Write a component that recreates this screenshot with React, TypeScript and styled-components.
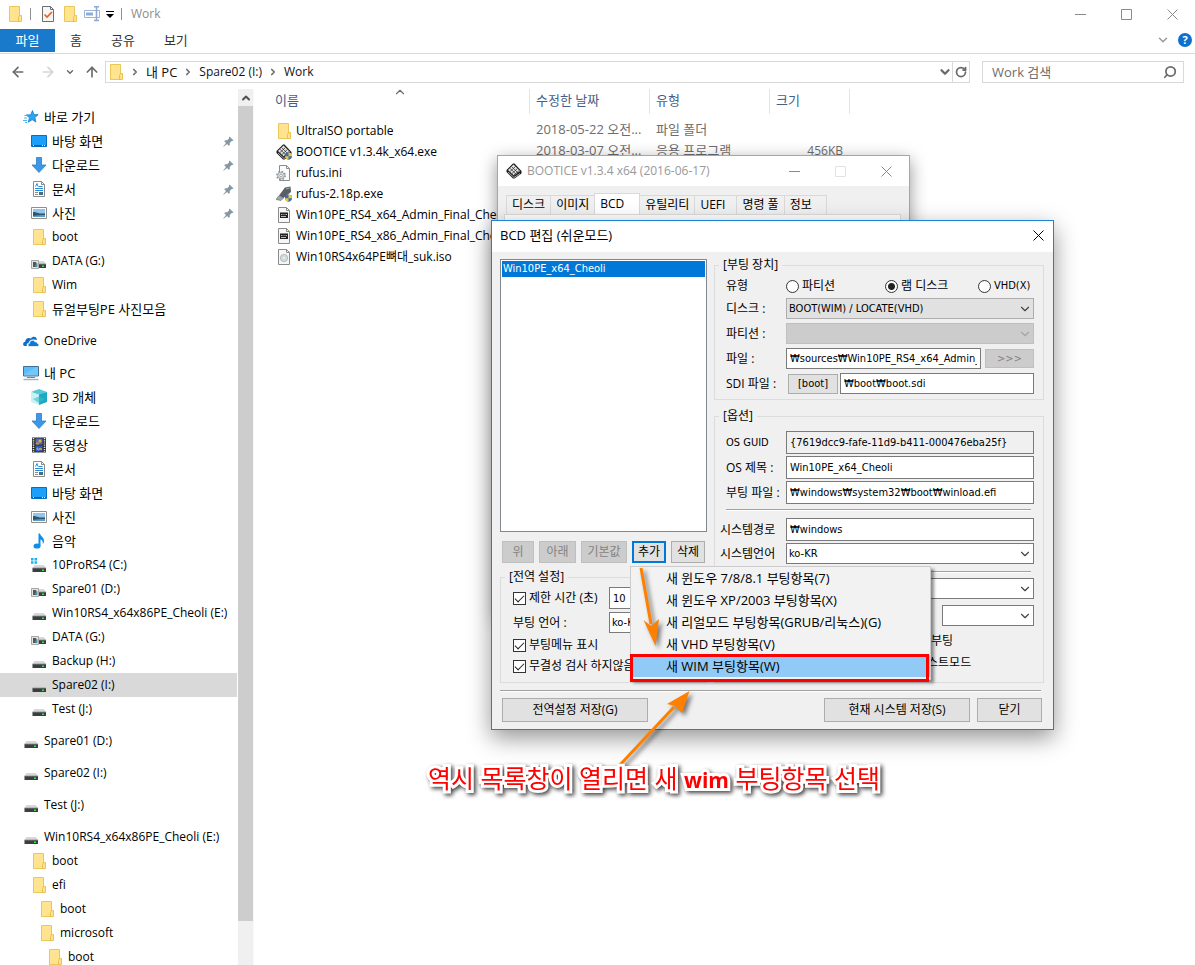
import React from 'react';
import styled, { createGlobalStyle, css } from 'styled-components';
import { ArrowLeft, ArrowRight, ArrowUp, ChevronDown, ChevronRight, ChevronUp, RotateCw, Search } from 'lucide-react';

const UI = '"Open Sans", "Noto Sans CJK KR", sans-serif';
const FORM = '"DejaVu Sans Condensed", "Noto Sans CJK KR", sans-serif';
const hasHangul = (s: string) => /[가-힣]/.test(s);

const Global = createGlobalStyle`
  *, *::before, *::after { box-sizing: border-box; }
  body { margin: 0; background: #fff; color: #000; font: 12px/16px ${UI}; }
  button, input, select { font: inherit; color: inherit; margin: 0; }
`;

/* ---------- icons ---------- */

const Svg = styled.svg.attrs({ viewBox: '0 0 16 16', width: 16, height: 16 })`
  display: block;
  flex: none;
`;

const FolderIcon = () => (
  <Svg>
    <path d="M2.500 .5h10v15h-10z" fill="#ffe38f" stroke="#e9c85a" />
    <path d="M12.500 9.500h2v6h-3v-4z" fill="#ffe38f" stroke="#e9b83a" strokeWidth=".8" />
  </Svg>
);
const StarIcon = () => (
  <Svg>
    <path d="M9.500 1.500l1.400 4 4.300.2-3.300 2.700 1 4.600-3.700-2.300-4 2.500 1.300-4.500L3.200 6l4.500-.2z" fill="#2fa3ee" stroke="#1380cf" strokeWidth=".8" />
    <path d="M1.500 6.500h3M1 9h3M0 11.500h4M2 13.500h2" stroke="#4db2f2" />
  </Svg>
);
const DesktopIcon = () => (
  <Svg>
    <path d="M.5 2.500h15v11H.5z" fill="#1aa0fb" stroke="#0a6cbb" />
    <path d="M1 12.500h14" stroke="#0a5fa8" />
    <path d="M2 12.500h1M11 12.500h1M13 12.500h1" stroke="#fff" />
  </Svg>
);
const DownIcon = () => (
  <Svg>
    <path d="M5.500.5h5V8h4.500L8 15.500 1 8h4.500z" fill="#3d97e6" stroke="#2c80cb" strokeWidth=".8" />
  </Svg>
);
const DocIcon = () => (
  <Svg>
    <path d="M2.500.5h8l3 3v12h-11z" fill="#fff" stroke="#8a8a8a" />
    <path d="M10.500.5v3h3" fill="none" stroke="#8a8a8a" />
    <path d="M4.500 5.500l1.500-3 1 3M7.500 5.500h4M4 7.500h8M4 9.500h8" stroke="#2a8ad6" fill="none" />
    <path d="M4 11.500h3M4 13.500h3" stroke="#8a8a8a" />
    <path d="M8 11h4v3H8z" fill="#3e6f86" />
  </Svg>
);
const PictureIcon = () => (
  <Svg>
    <path d="M.5 2.500h15v11H.5z" fill="#fff" stroke="#8f8f8f" />
    <path d="M2 4h12v8H2z" fill="#8fc4f5" />
    <path d="M2 7c3-.5 4 2 12 1.500V12H2z" fill="#2f5566" />
    <path d="M2 11c4-1 8-1 12-1v2H2z" fill="#5f9bc4" />
  </Svg>
);
const DriveIcon = ({ kind }: { kind?: 'win' | 'photo' }) => (
  <Svg>
    <path d="M3.500 8h9.500l2 3H1.500z" fill="#d5d8da" />
    <path d="M1.500 11H15v4H1.500z" fill="#3b3d3f" />
    <path d="M1.500 11H15" stroke="#8d9092" strokeWidth=".8" />
    <path d="M11 12.500h2v1.500h-2z" fill="#35e04c" />
    {kind === 'win' && (
      <>
        <path d="M0 0h7v7H0z" fill="#fff" />
        <path d="M0 1h2.500v2.500H0zM3.500 1H6v2.500H3.500zM0 4.300h2.500v2.500H0zM3.500 4.300H6v2.500H3.500z" fill="#17b4f0" />
      </>
    )}
    {kind === 'photo' && (
      <>
        <path d="M.5 7.500h7v8h-7z" fill="#e4e4e4" stroke="#a5a5a5" />
        <path d="M2 9h3l1 2.500V14H2z" fill="#4c5952" />
        <path d="M3.500 13l3-3v4z" fill="#4d9ac0" />
      </>
    )}
  </Svg>
);
const CloudIcon = () => (
  <Svg>
    <path d="M1.500 13C-.6 12.500-.2 9 2.200 8.700 2.200 5.500 5.600 4 8 5.600 9.500 2.500 14 3.500 14 7l-3-.5C8 6 6 8 5.500 10 3.500 10.500 3.500 12 4 13z" fill="#0f6fc9" />
    <path d="M6.500 13.500c-2-.3-1.800-3 0-3.200C6.600 7.500 10.500 6 12.300 9c2-.2 2.200 1 2.200 1.500 2 .6 1.700 3-.2 3z" fill="#0f78d4" stroke="#fff" strokeWidth=".7" />
  </Svg>
);
const PcIcon = () => (
  <Svg>
    <path d="M.5 1.500h15v9.500H.5z" fill="#5cbcf8" stroke="#44708f" />
    <path d="M1 9.500L13 2h2v8.500H1z" fill="#8ad2ff" opacity=".5" />
    <path d="M6 12.500h4M4 12.500h8" stroke="#6a8ba0" />
    <path d="M.5 14.500h15" stroke="#a5b4be" strokeWidth="1.500" />
  </Svg>
);
const CubeIcon = () => (
  <Svg>
    <path d="M0 3l8-3 8 3-8 3z" fill="#57c9d4" />
    <path d="M0 3l8 2.500V16l-8-3z" fill="#c9f1f4" />
    <path d="M16 3L8 5.500V16l8-3z" fill="#1ba9c4" />
    <path d="M2 10l6-2.500 6 2.500-6 4z" fill="#35bccb" opacity=".6" />
  </Svg>
);
const FilmIcon = () => (
  <Svg>
    <path d="M1 .5h14v15H1z" fill="#2b2b2b" />
    <path d="M2.500 1v14M13.500 1v14" stroke="#e8e8e8" strokeDasharray="1.200 1" strokeWidth="1.500" />
    <path d="M4.500 1.500h7v6h-7z" fill="#4f6fc6" />
    <path d="M4.500 8.500h7v6h-7z" fill="#3657b8" />
    <circle cx="9" cy="4" r="1.500" fill="#e9b22c" />
    <path d="M5 5.500h3v2H5zM8 11h3v2H8z" fill="#d8922a" />
    <path d="M5 12l2-2 1 4z" fill="#6db2ea" />
  </Svg>
);
const NoteIcon = () => (
  <Svg>
    <ellipse cx="6" cy="13" rx="3.500" ry="2.600" fill="#0f8ee9" />
    <path d="M7.500.5H9c.5 3 4.500 3.500 4 8.500-.5 1-.8 1.500-1.200 2C12 8 11 7 9.500 6.500V13h-2z" fill="#0f8ee9" />
  </Svg>
);
const PinIcon = () => (
  <svg width="11" height="11" viewBox="0 0 11 11">
    <path d="M6.500.5l4 4-1 .6-.8-.2-2 2 .1 2.100-1 .8L4 8 .6 10.800.2 10.400 3 7 1.300 5.200l.8-1 2.100.1 2-2L6 1.300z" fill="#8697a4" />
  </svg>
);
const CheckDocIcon = () => (
  <Svg>
    <path d="M2.500.5h8l3 3v12h-11z" fill="#f6f6f6" stroke="#6e6e6e" />
    <path d="M10.500.5v3h3" fill="none" stroke="#6e6e6e" />
    <path d="M4.500 8.500l2.500 2.500 5-5" fill="none" stroke="#ee5b1d" strokeWidth="1.600" />
  </Svg>
);
const RenameIcon = () => (
  <Svg>
    <path d="M.5 4.500h15v7H.5z" fill="#fff" stroke="#9db4d8" />
    <path d="M2 6.500h7v3H2z" fill="#8fabd4" />
    <path d="M12.500 1v13M10 .8h5M10 14.500h5" stroke="#8ea9d2" strokeWidth="1.600" />
  </Svg>
);
const ShieldBadge = () => (
  <>
    <path d="M9 9.500l3.500-1 3.500 1v3c0 2-2 3-3.500 3.500C11 15.500 9 14.500 9 12.500z" fill="#2d6fc0" />
    <path d="M12.500 8.500l3.500 1v2.700h-3.500zM9 12.200h3.500V16C11 15.500 9 14.500 9 12.200z" fill="#f7c531" />
  </>
);
const BooticeIcon = ({ shield }: { shield?: boolean }) => (
  <Svg>
    <path d="M7 .5h1.500L15.500 8v2.500l-7 5H7L.5 9V7z" fill="#1c1c1c" />
    <path d="M7.500 1.500L14 8l-6 4.500L2 7z" fill="#e2e2e2" />
    <path d="M5.500 3.500L12 10M4 5.200l6 6M9.500 3.500L4 8.500M11.500 5.500l-5.500 5M13 7.500l-5 4.500" stroke="#3a3a3a" strokeWidth=".8" />
    <path d="M2 9l6 5.500 6-4" stroke="#cfcfcf" strokeWidth=".8" fill="none" />
    {shield && <ShieldBadge />}
  </Svg>
);
const IniIcon = () => (
  <Svg>
    <path d="M3.500.5h7l3 3v12h-10z" fill="#fbfbfb" stroke="#8d8d8d" />
    <path d="M10.500.5v3h3" fill="none" stroke="#8d8d8d" />
    <circle cx="5" cy="10.500" r="4" fill="none" stroke="#90979c" strokeDasharray="1.600 1.540" strokeWidth="1.800" />
    <circle cx="5" cy="10.500" r="3.300" fill="#dfe3e5" stroke="#8d949a" strokeWidth=".8" />
    <circle cx="5" cy="10.500" r="1.300" fill="#fff" stroke="#8d949a" strokeWidth=".8" />
  </Svg>
);
const UsbIcon = () => (
  <Svg>
    <path d="M9 1.500L14.500.5 15 6 7.500 12 3 9.500z" fill="#5a5f63" />
    <path d="M10 3l3.500-1" stroke="#a8adb1" />
    <path d="M3 9.500L7.500 12 5 14.500 0 13.500z" fill="#9fa5a9" stroke="#606468" strokeWidth=".6" />
    <ShieldBadge />
  </Svg>
);
const WimIcon = () => (
  <Svg>
    <path d="M2.500.5h8l3 3v12h-11z" fill="#f7f7f7" stroke="#8a8a8a" />
    <path d="M10.500.5v3h3" fill="none" stroke="#8a8a8a" />
    <path d="M4 5h8v6H4z" fill="#222" />
    <path d="M5 7.500h1.500M7.500 7.500h1M9.500 7.500h1.500M5 9.500h5" stroke="#ccc" strokeWidth=".9" />
    <path d="M4 5.500h8" stroke="#888" />
  </Svg>
);
const IsoIcon = () => (
  <Svg>
    <path d="M2.500.5h8l3 3v12h-11z" fill="#f7f7f7" stroke="#8a8a8a" />
    <path d="M10.500.5v3h3" fill="none" stroke="#8a8a8a" />
    <circle cx="8" cy="9" r="3.700" fill="#d3d8db" stroke="#a9aeb1" strokeWidth=".7" />
    <circle cx="8" cy="9" r="1" fill="#f4f4f4" />
  </Svg>
);

/* ---------- explorer window ---------- */

const Desktop = styled.div`
  position: relative;
  height: 100vh;
  display: flex;
  flex-direction: column;
  overflow: hidden;
`;

const TitleBar = styled.header`
  display: flex;
  align-items: center;
  gap: 6px;
  height: 28px;
  padding-left: 7px;
  color: #8b8b8b;
`;

const Divider = styled.span`
  width: 1px;
  height: 12px;
  margin: 0 3px 0 1px;
  background: #8f8f8f;
`;

const QuickArrow = styled.span`
  width: 8px;
  border-top: 1px solid #000;
  padding-top: 2px;
  &::after {
    content: '';
    display: block;
    border: 4px solid transparent;
    border-top-color: #000;
    border-bottom: 0;
  }
`;

const WindowButtons = styled.div`
  display: flex;
  margin-left: auto;
`;

const WindowButton = styled.button<{ $dim?: boolean; $dark?: boolean }>`
  display: grid;
  place-items: center;
  width: 46px;
  height: 26px;
  padding: 0;
  border: 0;
  background: none;
  color: ${p => (p.$dark ? '#000' : p.$dim ? '#e2e2e2' : '#8a8a8a')};
`;

const CaptionGlyph = ({ d }: { d: string }) => (
  <svg width="11" height="11" viewBox="0 0 11 11" fill="none" stroke="currentColor">
    <path d={d} />
  </svg>
);
const MIN = 'M0 5.500h11';
const MAX = 'M.5 .5h10v10h-10z';
const CLOSE = 'M.5 .5l10 10M10.500 .5l-10 10';

const Ribbon = styled.nav`
  display: flex;
  align-items: center;
  gap: 1px;
  height: 26px;
  padding-bottom: 1px;
  border-bottom: 1px solid #dadbdc;
  font-size: 13px;
`;

const RibbonTab = styled.button<{ $active?: boolean }>`
  height: 23px;
  padding: 0 14px;
  border: 0;
  background: none;
  color: #333;
  ${p => p.$active && css`
    min-width: 55px;
    background: #1979ca;
    color: #fff;
  `}
`;

const RibbonEnd = styled.div`
  display: flex;
  align-items: center;
  gap: 8px;
  margin-left: auto;
  padding-right: 3px;
  color: #9a9a9a;
`;

const HelpButton = styled.button`
  width: 14px;
  height: 14px;
  padding: 0;
  border: 0;
  border-radius: 50%;
  background: #0f70cf;
  color: #fff;
  font: bold 11px/14px ${UI};
`;

const NavRow = styled.div`
  display: flex;
  align-items: center;
  height: 35px;
  padding: 0 11px 0 10px;
  color: #6b6b6b;
`;

const NavButtons = styled.div`
  display: flex;
  align-items: center;
  gap: 9px;
  margin-right: 5px;
`;

const IconButton = styled.button<{ $faint?: boolean }>`
  display: grid;
  place-items: center;
  margin-left: ${p => (p.$faint ? 5 : 0)}px;
  padding: 0;
  border: 0;
  background: none;
  color: ${p => (p.$faint ? '#d4d4d4' : '#6b6b6b')};
`;

const AddressBar = styled.div`
  display: flex;
  align-items: center;
  flex: 1;
  height: 22px;
  border: 1px solid #d9d9d9;
  padding-left: 2px;
`;

const Crumb = styled.a<{ $ko?: boolean }>`
  color: #111;
  text-decoration: none;
  font-size: ${p => (p.$ko ? 13 : 12)}px;
`;

const CrumbArrow = styled.span`
  display: grid;
  place-items: center;
  width: 22px;
`;

const AddressEnd = styled.div`
  display: flex;
  align-items: center;
  height: 100%;
  margin-left: auto;
`;

const RefreshCell = styled.div`
  display: grid;
  place-items: center;
  width: 17px;
  height: 100%;
  border-left: 1px solid #d9d9d9;
`;

const SearchBox = styled.label`
  display: flex;
  align-items: center;
  width: 202px;
  height: 22px;
  margin-left: 12px;
  padding: 0 6px 0 9px;
  border: 1px solid #d9d9d9;
`;

const SearchInput = styled.input`
  flex: 1;
  min-width: 0;
  padding: 0;
  border: 0;
  outline: 0;
  background: none;
  font-size: 13px;
  &::placeholder { color: #6d6d6d; opacity: 1; }
`;

const SearchGlyph = styled(Search)`
  transform: scaleX(-1);
`;

const Main = styled.main`
  display: flex;
  flex: 1;
  min-height: 0;
`;

const Sidebar = styled.nav`
  width: 237px;
  padding-top: 16px;
  overflow: hidden;
`;

const TreeItem = styled.a<{ $level: number; $gap?: boolean; $active?: boolean; $ko?: boolean }>`
  display: flex;
  align-items: center;
  gap: 5px;
  height: 24px;
  margin-top: ${p => (p.$gap ? 8 : 0)}px;
  padding: 0 3px 0 ${p => 23 + p.$level * 8}px;
  background: ${p => (p.$active ? '#d9d9d9' : 'none')};
  color: #000;
  text-decoration: none;
  white-space: nowrap;
  font-size: ${p => (p.$ko ? 13 : 12)}px;
  line-height: ${p => (p.$ko ? 18 : 16)}px;
`;

const PinSlot = styled.span`
  margin-left: auto;
  display: flex;
`;

const ScrollBar = styled.div`
  display: flex;
  flex-direction: column;
  width: 16px;
  margin-left: 1px;
  background: #f0f0f0;
  border-right: 1px solid #f8f8f8;
`;

const ScrollUp = styled.button`
  display: grid;
  place-items: center;
  height: 17px;
  padding: 0;
  border: 0;
  background: none;
  color: #505050;
`;

const ScrollThumb = styled.div`
  flex: 815;
  background: #cdcdcd;
`;

const ScrollRest = styled.div`
  flex: 44;
`;

const FilePane = styled.section`
  flex: 1;
  min-width: 0;
  margin-left: 3px;
  padding-left: 12px;
`;

const FileTable = styled.table`
  width: 581px;
  table-layout: fixed;
  border-collapse: collapse;
`;

const HeadCell = styled.th<{ $w: number }>`
  position: relative;
  width: ${p => p.$w}px;
  padding: 0 0 6px;
  color: #44608a;
  font-size: 13px;
  font-weight: normal;
  text-align: left;
  & > span {
    display: block;
    height: 25px;
    padding-left: 6px;
    border-right: 1px solid #e5e5e5;
    line-height: 23px;
  }
`;

const SortMark = styled(ChevronUp)`
  position: absolute;
  top: -4px;
  left: calc(50% - 7px);
  color: #6d6d6d;
`;

const Cell = styled.td<{ $meta?: boolean; $right?: boolean; $ko?: boolean }>`
  height: 21px;
  padding: 0 7px 0 ${p => (p.$meta ? 6 : 7)}px;
  overflow: hidden;
  white-space: nowrap;
  text-overflow: ellipsis;
  vertical-align: ${p => (p.$meta ? 'top' : 'middle')};
  line-height: ${p => (p.$meta ? 19 : 20)}px;
  color: ${p => (p.$meta ? '#6d6d6d' : '#000')};
  text-align: ${p => (p.$right ? 'right' : 'left')};
  font-size: ${p => (p.$ko ? 13 : 12)}px;
`;

const FileName = styled.span`
  display: flex;
  align-items: center;
  gap: 4px;
`;

/* ---------- BOOTICE window ---------- */

const BooticeWindow = styled.section`
  position: absolute;
  left: 497px;
  top: 155px;
  width: 413px;
  height: 460px;
  border: 1px solid #a6a6a6;
  background: #f0f0f0;
  box-shadow: 0 5px 16px rgba(0, 0, 0, 0.42);
`;

const BooticeTitle = styled.header`
  display: flex;
  align-items: center;
  gap: 5px;
  height: 30px;
  padding-left: 8px;
  background: #fff;
  color: #999;
`;

const TabStrip = styled.div`
  display: flex;
  align-items: flex-end;
  height: 28px;
  padding: 0 0 0 9px;
`;

const Tab = styled.button<{ $active?: boolean }>`
  min-width: 43px;
  height: ${p => (p.$active ? 21 : 19)}px;
  margin-left: -1px;
  padding: 0 5px;
  border: 1px solid #d9d9d9;
  border-bottom: 0;
  background: ${p => (p.$active ? '#fff' : '#f0f0f0')};
  text-align: left;
  line-height: 18px;
  ${p => p.$active && css`width: 46px;`}
`;

const TabPage = styled.div`
  height: 390px;
  margin: 0 8px 0 6px;
  border: 1px solid #dcdcdc;
  background: #fff;
`;

/* ---------- BCD dialog ---------- */

const Dialog = styled.section`
  position: absolute;
  left: 491px;
  top: 220px;
  width: 563px;
  border: 1px solid #1883d7;
  background: #f0f0f0;
  box-shadow: 0 8px 22px rgba(0, 0, 0, 0.42);
  font-size: 12px;
`;

const DialogTitle = styled.header`
  display: flex;
  align-items: center;
  justify-content: space-between;
  height: 31px;
  padding: 0 0 3px 8px;
  background: #fff;
  font-size: 13px;
`;

const DialogButtonSlot = styled.div`
  margin-right: -8px;
`;

const DialogBody = styled.form`
  padding: 5px 9px 7px 8px;
`;

const Columns = styled.div`
  display: grid;
  grid-template-columns: 207px 1fr;
  gap: 7px;
`;

const Column = styled.div`
  display: flex;
  flex-direction: column;
`;

const ListBox = styled.ul`
  height: 273px;
  margin: 2px 0 9px;
  padding: 1px;
  border: 1px solid #828790;
  background: #fff;
  list-style: none;
`;

const ListRow = styled.li`
  height: 16px;
  padding-left: 1px;
  background: #0078d7;
  color: #fff;
  font: 11px/15px ${FORM};
`;

const ButtonRow = styled.div`
  display: flex;
  gap: 5px;
  margin-bottom: 6px;
  padding: 0 2px;
`;

const Button = styled.button<{ $w: number; $focus?: boolean; $latin?: boolean; $h?: number }>`
  flex: none;
  width: ${p => p.$w}px;
  height: ${p => p.$h ?? 22}px;
  padding: 0;
  border: ${p => (p.$focus ? '2px solid #0078d7' : '1px solid #adadad')};
  background: #e1e1e1;
  line-height: 16px;
  white-space: nowrap;
  ${p => p.$latin && css`font: 11px/16px ${FORM};`}
  &:disabled { background: #ccc; border-color: #bfbfbf; color: #838383; }
`;

const Group = styled.fieldset<{ $pad: string }>`
  min-width: 0;
  margin: 0;
  padding: ${p => p.$pad};
  border: 1px solid #dcdcdc;
`;

const OptionsGroup = styled(Group)`
  margin-top: 8px;
`;

const Legend = styled.legend<{ $shift: number }>`
  height: 16px;
  margin-left: ${p => p.$shift}px;
  padding: 0 4px;
  line-height: 16px;
`;

const Rows = styled.div<{ $gap: number }>`
  display: flex;
  flex-direction: column;
  gap: ${p => p.$gap}px;
`;

const FieldRow = styled.div<{ $h: number; $label: number }>`
  display: grid;
  grid-template-columns: ${p => p.$label}px 1fr;
  align-items: center;
  height: ${p => p.$h}px;
`;

const FieldLabel = styled.label<{ $indent?: boolean; $latin?: boolean }>`
  padding-left: ${p => (p.$indent ? 6 : 0)}px;
  white-space: nowrap;
  ${p => p.$latin && css`font-family: ${FORM}; font-size: 11px;`}
`;

const TextInput = styled.input<{ $muted?: boolean }>`
  width: 100%;
  min-width: 0;
  height: 100%;
  padding: 0 3px;
  border: 1px solid #7a7a7a;
  background: ${p => (p.$muted ? '#f0f0f0' : '#fff')};
  outline: 0;
  font: 11px/16px ${FORM};
`;

const Inline = styled.div`
  display: flex;
  align-items: center;
  gap: 4px;
  height: 100%;
`;

const SdiInline = styled(Inline)`
  gap: 2px;
  padding-left: 2px;
`;

const ComboWrap = styled.div<{ $w?: number; $disabled?: boolean }>`
  position: relative;
  width: ${p => (p.$w ? `${p.$w}px` : '100%')};
  height: 21px;
  color: ${p => (p.$disabled ? '#a5a5a5' : '#444')};
  & > svg {
    position: absolute;
    right: 2px;
    top: 4px;
    pointer-events: none;
  }
`;

const ComboSelect = styled.select<{ $look: 'white' | 'gray' | 'off' }>`
  appearance: none;
  width: 100%;
  height: 100%;
  padding: 0 18px 0 2px;
  border: 1px solid ${p => ({ white: '#7a7a7a', gray: '#adadad', off: '#bfbfbf' })[p.$look]};
  border-radius: 0;
  background: ${p => ({ white: '#fff', gray: '#e1e1e1', off: '#ccc' })[p.$look]};
  color: #000;
  opacity: 1;
  font: 11px/16px ${FORM};
`;

type ComboProps = { id: string; value?: string; look?: 'white' | 'gray' | 'off'; w?: number; label?: string };
const Combo = ({ id, value = '', look = 'white', w, label }: ComboProps) => (
  <ComboWrap $w={w} $disabled={look === 'off'}>
    <ComboSelect id={id} $look={look} disabled={look === 'off'} aria-label={label}>
      <option>{value}</option>
    </ComboSelect>
    <ChevronDown size={14} strokeWidth={2} />
  </ComboWrap>
);

const Rule = styled.hr<{ $m: string }>`
  height: 2px;
  margin: ${p => p.$m};
  border: 0;
  border-top: 1px solid #a0a0a0;
  background: #fff;
`;

const RadioGroup = styled.div`
  display: grid;
  grid-template-columns: 99px 93px 1fr;
  align-items: center;
`;

const Choice = styled.label<{ $latin?: boolean }>`
  display: flex;
  align-items: center;
  gap: 3px;
  white-space: nowrap;
  ${p => p.$latin && css`font: 11px/16px ${FORM};`}
`;

const Radio = styled.input.attrs({ type: 'radio' })`
  appearance: none;
  width: 13px;
  height: 13px;
  border: 1px solid #333;
  border-radius: 50%;
  background: #fff;
  &:checked { background: radial-gradient(circle, #222 0 3px, #fff 4px); }
`;

const Check = styled.input.attrs({ type: 'checkbox' })`
  appearance: none;
  display: grid;
  place-items: center;
  width: 13px;
  height: 13px;
  border: 1px solid #333;
  background: #fff;
  &:checked::before {
    content: '';
    width: 9px;
    height: 5px;
    margin-top: -2px;
    border: solid #222;
    border-width: 0 0 1px 1px;
    transform: rotate(-45deg);
  }
`;

const CheckLine = styled.div<{ $h: number; $left?: number }>`
  display: flex;
  align-items: center;
  height: ${p => p.$h}px;
  padding-left: ${p => p.$left ?? 0}px;
`;

const RightAligned = styled.div`
  display: flex;
  justify-content: flex-end;
  margin-bottom: 6px;
`;

const Footer = styled.footer`
  display: flex;
  gap: 7px;
  padding: 0 2px;
  & > :first-child { margin-right: auto; }
`;

/* ---------- popup menu ---------- */

const MenuAnchor = styled.div`
  position: relative;
`;

const Menu = styled.ul`
  position: absolute;
  z-index: 2;
  top: 25px;
  left: -2px;
  width: 301px;
  margin: 0;
  padding: 0 0 2px;
  border: 1px solid #ccc;
  background: #f2f2f2;
  box-shadow: 3px 3px 3px rgba(0, 0, 0, 0.45);
  list-style: none;
  font-size: 13px;
`;

const MenuItem = styled.li<{ $active?: boolean }>`
  position: relative;
  height: 22px;
  padding-left: 35px;
  line-height: 22px;
  white-space: nowrap;
  ${p => p.$active && css`
    background: #91c9f7;
    &::after {
      content: '';
      position: absolute;
      inset: -1px 1px -5px -1px;
      border: 3px solid #fe0000;
    }
  `}
`;

/* ---------- annotations ---------- */

const Arrows = styled.svg`
  position: absolute;
  z-index: 3;
  left: 610px;
  top: 560px;
  overflow: visible;
  pointer-events: none;
  filter: drop-shadow(3px 3px 2px rgba(0, 0, 0, 0.5));
`;

const Caption = styled.p`
  position: absolute;
  z-index: 3;
  left: 428px;
  top: 760px;
  margin: 0;
  color: #fe0000;
  font-size: 25px;
  line-height: 36px;
  white-space: nowrap;
  -webkit-text-stroke: 6px #fff;
  paint-order: stroke fill;
  stroke-linejoin: round;
  filter: drop-shadow(2px 2px 2px rgba(0, 0, 0, 0.75));
  & > strong { font-size: 21px; }
`;

/* ---------- data ---------- */

type Node = { t: string; i: React.ReactNode; l: number; gap?: boolean; pin?: boolean; on?: boolean };
const TREE: Node[] = [
  { t: '바로 가기', i: <StarIcon />, l: 0 },
  { t: '바탕 화면', i: <DesktopIcon />, l: 1, pin: true },
  { t: '다운로드', i: <DownIcon />, l: 1, pin: true },
  { t: '문서', i: <DocIcon />, l: 1, pin: true },
  { t: '사진', i: <PictureIcon />, l: 1, pin: true },
  { t: 'boot', i: <FolderIcon />, l: 1 },
  { t: 'DATA (G:)', i: <DriveIcon kind="photo" />, l: 1 },
  { t: 'Wim', i: <FolderIcon />, l: 1 },
  { t: '듀얼부팅PE 사진모음', i: <FolderIcon />, l: 1 },
  { t: 'OneDrive', i: <CloudIcon />, l: 0, gap: true },
  { t: '내 PC', i: <PcIcon />, l: 0, gap: true },
  { t: '3D 개체', i: <CubeIcon />, l: 1 },
  { t: '다운로드', i: <DownIcon />, l: 1 },
  { t: '동영상', i: <FilmIcon />, l: 1 },
  { t: '문서', i: <DocIcon />, l: 1 },
  { t: '바탕 화면', i: <DesktopIcon />, l: 1 },
  { t: '사진', i: <PictureIcon />, l: 1 },
  { t: '음악', i: <NoteIcon />, l: 1 },
  { t: '10ProRS4 (C:)', i: <DriveIcon kind="win" />, l: 1 },
  { t: 'Spare01 (D:)', i: <DriveIcon kind="photo" />, l: 1 },
  { t: 'Win10RS4_x64x86PE_Cheoli (E:)', i: <DriveIcon />, l: 1 },
  { t: 'DATA (G:)', i: <DriveIcon kind="photo" />, l: 1 },
  { t: 'Backup (H:)', i: <DriveIcon />, l: 1 },
  { t: 'Spare02 (I:)', i: <DriveIcon />, l: 1, on: true },
  { t: 'Test (J:)', i: <DriveIcon />, l: 1 },
  { t: 'Spare01 (D:)', i: <DriveIcon />, l: 0, gap: true },
  { t: 'Spare02 (I:)', i: <DriveIcon />, l: 0, gap: true },
  { t: 'Test (J:)', i: <DriveIcon />, l: 0, gap: true },
  { t: 'Win10RS4_x64x86PE_Cheoli (E:)', i: <DriveIcon />, l: 0, gap: true },
  { t: 'boot', i: <FolderIcon />, l: 1 },
  { t: 'efi', i: <FolderIcon />, l: 1 },
  { t: 'boot', i: <FolderIcon />, l: 2 },
  { t: 'microsoft', i: <FolderIcon />, l: 2 },
  { t: 'boot', i: <FolderIcon />, l: 3 },
];

const FILES: { n: string; i: React.ReactNode; d?: string; k?: string; s?: string }[] = [
  { n: 'UltraISO portable', i: <FolderIcon />, d: '2018-05-22 오전...', k: '파일 폴더' },
  { n: 'BOOTICE v1.3.4k_x64.exe', i: <BooticeIcon shield />, d: '2018-03-07 오전...', k: '응용 프로그램', s: '456KB' },
  { n: 'rufus.ini', i: <IniIcon /> },
  { n: 'rufus-2.18p.exe', i: <UsbIcon /> },
  { n: 'Win10PE_RS4_x64_Admin_Final_Cheoli', i: <WimIcon /> },
  { n: 'Win10PE_RS4_x86_Admin_Final_Cheoli', i: <WimIcon /> },
  { n: 'Win10RS4x64PE뼈대_suk.iso', i: <IsoIcon /> },
];

const MENU = [
  '새 윈도우 7/8/8.1 부팅항목(7)',
  '새 윈도우 XP/2003 부팅항목(X)',
  '새 리얼모드 부팅항목(GRUB/리눅스)(G)',
  '새 VHD 부팅항목(V)',
  '새 WIM 부팅항목(W)',
];

const TABS = ['디스크', '이미지', 'BCD', '유틸리티', 'UEFI', '명령 풀', '정보'];

/* ---------- views ---------- */

const Explorer = () => (
  <>
    <TitleBar>
      <FolderIcon />
      <Divider />
      <CheckDocIcon />
      <FolderIcon />
      <RenameIcon />
      <QuickArrow />
      <Divider />
      <span>Work</span>
      <WindowButtons>
        <WindowButton aria-label="최소화"><CaptionGlyph d={MIN} /></WindowButton>
        <WindowButton aria-label="최대화"><CaptionGlyph d={MAX} /></WindowButton>
        <WindowButton aria-label="닫기"><CaptionGlyph d={CLOSE} /></WindowButton>
      </WindowButtons>
    </TitleBar>
    <Ribbon>
      <RibbonTab $active>파일</RibbonTab>
      <RibbonTab>홈</RibbonTab>
      <RibbonTab>공유</RibbonTab>
      <RibbonTab>보기</RibbonTab>
      <RibbonEnd>
        <ChevronDown size={14} strokeWidth={2.5} />
        <HelpButton>?</HelpButton>
      </RibbonEnd>
    </Ribbon>
    <NavRow>
      <NavButtons>
        <IconButton aria-label="뒤로"><ArrowLeft size={16} strokeWidth={2.5} /></IconButton>
        <IconButton aria-label="앞으로" $faint><ArrowRight size={16} strokeWidth={2.5} /></IconButton>
        <IconButton aria-label="최근 위치"><ChevronDown size={10} strokeWidth={3.5} /></IconButton>
        <IconButton aria-label="위로"><ArrowUp size={16} strokeWidth={2.5} /></IconButton>
      </NavButtons>
      <AddressBar>
        <FolderIcon />
        <CrumbArrow><ChevronRight size={10} strokeWidth={4} /></CrumbArrow>
        <Crumb href="#pc" $ko>내 PC</Crumb>
        <CrumbArrow><ChevronRight size={10} strokeWidth={4} /></CrumbArrow>
        <Crumb href="#spare02">Spare02 (I:)</Crumb>
        <CrumbArrow><ChevronRight size={10} strokeWidth={4} /></CrumbArrow>
        <Crumb href="#work">Work</Crumb>
        <AddressEnd>
          <ChevronDown size={14} strokeWidth={4} />
          <RefreshCell><RotateCw size={12} strokeWidth={3.5} /></RefreshCell>
        </AddressEnd>
      </AddressBar>
      <SearchBox>
        <SearchInput placeholder="Work 검색" aria-label="Work 검색" />
        <SearchGlyph size={14} strokeWidth={3} />
      </SearchBox>
    </NavRow>
    <Main>
      <Sidebar>
        {TREE.map((n, k) => (
          <TreeItem key={k} href="#" $level={n.l} $gap={n.gap} $active={n.on} $ko={hasHangul(n.t)}>
            {n.i}
            {n.t}
            {n.pin && <PinSlot><PinIcon /></PinSlot>}
          </TreeItem>
        ))}
      </Sidebar>
      <ScrollBar>
        <ScrollUp aria-label="위로 스크롤"><ChevronUp size={12} strokeWidth={4} /></ScrollUp>
        <ScrollThumb />
        <ScrollRest />
      </ScrollBar>
      <FilePane>
        <FileTable>
          <thead>
            <tr>
              <HeadCell $w={261}><SortMark size={14} strokeWidth={2} /><span>이름</span></HeadCell>
              <HeadCell $w={120}><span>수정한 날짜</span></HeadCell>
              <HeadCell $w={120}><span>유형</span></HeadCell>
              <HeadCell $w={80}><span>크기</span></HeadCell>
            </tr>
          </thead>
          <tbody>
            {FILES.map(f => (
              <tr key={f.n}>
                <Cell><FileName>{f.i}{f.n}</FileName></Cell>
                <Cell $meta $ko>{f.d}</Cell>
                <Cell $meta $ko>{f.k}</Cell>
                <Cell $meta $right>{f.s}</Cell>
              </tr>
            ))}
          </tbody>
        </FileTable>
      </FilePane>
    </Main>
  </>
);

const Bootice = () => (
  <BooticeWindow>
    <BooticeTitle>
      <BooticeIcon />
      <span>BOOTICE v1.3.4 x64 (2016-06-17)</span>
      <WindowButtons>
        <WindowButton aria-label="최소화"><CaptionGlyph d={MIN} /></WindowButton>
        <WindowButton aria-label="최대화" $dim disabled><CaptionGlyph d={MAX} /></WindowButton>
        <WindowButton aria-label="닫기"><CaptionGlyph d={CLOSE} /></WindowButton>
      </WindowButtons>
    </BooticeTitle>
    <TabStrip>
      {TABS.map(t => <Tab key={t} $active={t === 'BCD'}>{t}</Tab>)}
    </TabStrip>
    <TabPage />
  </BooticeWindow>
);

const LeftColumn = () => (
  <Column>
    <ListBox>
      <ListRow>Win10PE_x64_Cheoli</ListRow>
    </ListBox>
    <ButtonRow>
      <Button type="button" $w={32} disabled>위</Button>
      <Button type="button" $w={37} disabled>아래</Button>
      <Button type="button" $w={46} disabled>기본값</Button>
      <MenuAnchor>
        <Button type="button" $w={34} $focus>추가</Button>
        <Menu>
          {MENU.map((m, k) => <MenuItem key={m} $active={k === 4}>{m}</MenuItem>)}
        </Menu>
      </MenuAnchor>
      <Button type="button" $w={34}>삭제</Button>
    </ButtonRow>
    <Group $pad="2px 6px 7px 12px">
      <Legend $shift={-8}>[전역 설정]</Legend>
      <Rows $gap={3}>
        <FieldRow $h={22} $label={96}>
          <Choice><Check defaultChecked />제한 시간 (초)</Choice>
          <TextInput defaultValue="10" aria-label="제한 시간" />
        </FieldRow>
        <FieldRow $h={21} $label={96}>
          <FieldLabel htmlFor="bootlang">부팅 언어 :</FieldLabel>
          <Combo id="bootlang" value="ko-KR" />
        </FieldRow>
        <CheckLine $h={18}><Choice><Check defaultChecked />부팅메뉴 표시</Choice></CheckLine>
        <CheckLine $h={18}><Choice><Check defaultChecked />무결성 검사 하지않음</Choice></CheckLine>
      </Rows>
    </Group>
  </Column>
);

const RightColumn = () => (
  <Column>
    <Group $pad="5px 9px 5px 11px">
      <Legend $shift={-7}>[부팅 장치]</Legend>
      <Rows $gap={4}>
        <FieldRow $h={16} $label={60}>
          <span>유형</span>
          <RadioGroup>
            <Choice><Radio name="type" />파티션</Choice>
            <Choice><Radio name="type" defaultChecked />램 디스크</Choice>
            <Choice $latin><Radio name="type" />VHD(X)</Choice>
          </RadioGroup>
        </FieldRow>
        <FieldRow $h={21} $label={60}>
          <FieldLabel htmlFor="disk">디스크 :</FieldLabel>
          <Combo id="disk" look="gray" value="BOOT(WIM) / LOCATE(VHD)" />
        </FieldRow>
        <FieldRow $h={21} $label={60}>
          <FieldLabel htmlFor="part">파티션 :</FieldLabel>
          <Combo id="part" look="off" />
        </FieldRow>
        <FieldRow $h={21} $label={60}>
          <FieldLabel htmlFor="file">파일 :</FieldLabel>
          <Inline>
            <TextInput id="file" defaultValue="₩sources₩Win10PE_RS4_x64_Admin_Final" />
            <Button type="button" $w={49} $h={19} $latin disabled>&gt;&gt;&gt;</Button>
          </Inline>
        </FieldRow>
        <FieldRow $h={21} $label={60}>
          <FieldLabel htmlFor="sdi">SDI 파일 :</FieldLabel>
          <SdiInline>
            <Button type="button" $w={50} $h={20} $latin>[boot]</Button>
            <TextInput id="sdi" defaultValue="₩boot₩boot.sdi" />
          </SdiInline>
        </FieldRow>
      </Rows>
    </Group>
    <OptionsGroup $pad="7px 9px 10px 5px">
      <Legend $shift={-1}>[옵션]</Legend>
      <Rows $gap={2}>
        <FieldRow $h={23} $label={66}>
          <FieldLabel htmlFor="guid" $indent $latin>OS GUID</FieldLabel>
          <TextInput id="guid" $muted readOnly defaultValue="{7619dcc9-fafe-11d9-b411-000476eba25f}" />
        </FieldRow>
        <FieldRow $h={23} $label={66}>
          <FieldLabel htmlFor="ostitle" $indent>OS 제목 :</FieldLabel>
          <TextInput id="ostitle" defaultValue="Win10PE_x64_Cheoli" />
        </FieldRow>
        <FieldRow $h={23} $label={66}>
          <FieldLabel htmlFor="bootfile" $indent>부팅 파일 :</FieldLabel>
          <TextInput id="bootfile" defaultValue="₩windows₩system32₩boot₩winload.efi" />
        </FieldRow>
      </Rows>
      <Rule $m="5px 3px 7px 6px" />
      <Rows $gap={2}>
        <FieldRow $h={23} $label={66}>
          <FieldLabel htmlFor="syspath">시스템경로</FieldLabel>
          <TextInput id="syspath" defaultValue="₩windows" />
        </FieldRow>
        <FieldRow $h={21} $label={66}>
          <FieldLabel htmlFor="syslang">시스템언어</FieldLabel>
          <Combo id="syslang" value="ko-KR" />
        </FieldRow>
      </Rows>
      <Rule $m="7px 3px 5px 6px" />
      <RightAligned>
        <Combo id="pae" w={190} label="PAE" />
      </RightAligned>
      <RightAligned>
        <Combo id="nx" w={92} label="NX" />
      </RightAligned>
      <Rows $gap={4}>
        <CheckLine $h={18} $left={195}><Choice><Check />부팅</Choice></CheckLine>
        <CheckLine $h={18} $left={180}><Choice><Check />테스트모드</Choice></CheckLine>
      </Rows>
    </OptionsGroup>
  </Column>
);

const BcdDialog = () => (
  <Dialog role="dialog" aria-label="BCD 편집">
    <DialogTitle>
      <span>BCD 편집 (쉬운모드)</span>
      <DialogButtonSlot>
        <WindowButton aria-label="닫기" $dark><CaptionGlyph d={CLOSE} /></WindowButton>
      </DialogButtonSlot>
    </DialogTitle>
    <DialogBody onSubmit={e => e.preventDefault()}>
      <Columns>
        <LeftColumn />
        <RightColumn />
      </Columns>
      <Rule $m="7px 3px 6px 0" />
      <Footer>
        <Button type="button" $w={146} $h={24}>전역설정 저장(G)</Button>
        <Button type="button" $w={146} $h={24}>현재 시스템 저장(S)</Button>
        <Button type="button" $w={65} $h={24}>닫기</Button>
      </Footer>
    </DialogBody>
  </Dialog>
);

export default function App() {
  return (
    <Desktop>
      <Global />
      <Explorer />
      <Bootice />
      <BcdDialog />
      <Arrows width="90" height="215" viewBox="0 0 90 215" fill="#ff8000" stroke="#ff8000">
        <path d="M31 8L41 64M8 207L64 147" strokeWidth="3" />
        <path d="M45.500 86L33.500 60 41 66 49 59z" stroke="none" />
        <path d="M79.500 131L72 153 65 146 57 144z" stroke="none" />
      </Arrows>
      <Caption>역시 목록창이 열리면 새 <strong>wim</strong> 부팅항목 선택</Caption>
    </Desktop>
  );
}
